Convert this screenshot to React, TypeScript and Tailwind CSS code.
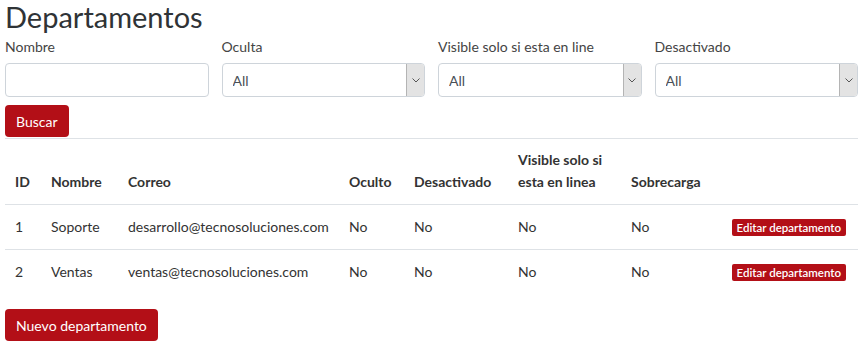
import React from 'react';

const filtros = ['Oculta', 'Visible solo si esta en line', 'Desactivado'];

const departamentos = [
  { id: 1, nombre: 'Soporte', correo: 'desarrollo@tecnosoluciones.com' },
  { id: 2, nombre: 'Ventas', correo: 'ventas@tecnosoluciones.com' },
];

function SelectAll() {
  return (
    <div className="relative h-[34px]">
      <select className="appearance-none w-full h-full rounded border border-[#ced4da] bg-white pl-[10px] text-[14px] text-[#495057] outline-none">
        <option>All</option>
      </select>
      <span className="absolute right-[1px] top-[1px] bottom-[1px] w-[18px] flex items-center justify-center bg-[#e3e3e3] border-l border-[#b4b4b4] rounded-r-[3px]">
        <svg width="8" height="5" viewBox="0 0 8 5" fill="none">
          <path d="M0.5 0.5 L4 4 L7.5 0.5" stroke="#555" strokeWidth="1" />
        </svg>
      </span>
    </div>
  );
}

export default function App() {
  return (
    <div className="px-[5px] pr-[6px] bg-white text-[#212529]" style={{ fontFamily: 'Lato, "Noto Sans", sans-serif' }}>
      <h3 className="text-[29px] leading-[35px] text-[#2f3336] -mt-[1px]">Departamentos</h3>

      {/* Filtros */}
      <div className="grid grid-cols-4 gap-x-[13px] mt-[3px]">
        <div>
          <label className="block text-[14px] leading-[20px] text-[#444] mb-[6px]">Nombre</label>
          <input type="text" className="w-full h-[34px] rounded border border-[#ced4da] bg-white outline-none" />
        </div>
        {filtros.map(f => (
          <div key={f}>
            <label className="block text-[14px] leading-[20px] text-[#444] mb-[6px]">{f}</label>
            <SelectAll />
          </div>
        ))}
      </div>

      <div className="mt-[8px] pb-[1px] border-b border-[#dee2e6]">
        <button className="h-[32px] px-[11px] rounded bg-[#b30f17] text-white text-[14px]">Buscar</button>
      </div>

      {/* Tabla */}
      <table className="table-fixed w-[853px] border-collapse text-[14px]">
        <colgroup>
          <col className="w-[36px]" />
          <col className="w-[77px]" />
          <col className="w-[221px]" />
          <col className="w-[65px]" />
          <col className="w-[104px]" />
          <col className="w-[113px]" />
          <col className="w-[100px]" />
          <col className="w-[137px]" />
        </colgroup>
        <thead>
          <tr className="h-[65px] border-b border-[#dee2e6]">
            {['ID', 'Nombre', 'Correo', 'Oculto', 'Desactivado', 'Visible solo si esta en linea', 'Sobrecarga', ''].map((h, i) => (
              <th key={i} className="align-bottom text-left font-bold pl-[10px] pb-[11px] leading-[22px] text-[#333]">{h}</th>
            ))}
          </tr>
        </thead>
        <tbody>
          {departamentos.map((d, i) => (
            <tr key={d.id} className={`h-[45px] ${i === 0 ? 'border-b border-[#dee2e6]' : ''}`}>
              <td className="pl-[10px] text-[#333]">{d.id}</td>
              <td className="pl-[10px] text-[#333]">{d.nombre}</td>
              <td className="pl-[10px] text-[#333]">{d.correo}</td>
              <td className="pl-[10px] text-[#333]">No</td>
              <td className="pl-[10px] text-[#333]">No</td>
              <td className="pl-[10px] text-[#333]">No</td>
              <td className="pl-[10px] text-[#333]">No</td>
              <td className="pl-[4px] pr-[12px] text-right whitespace-nowrap">
                <button className="h-[17px] px-[5px] rounded-[2px] bg-[#b30f17] text-white text-[11.5px] font-semibold leading-[17px] whitespace-nowrap">Editar departamento</button>
              </td>
            </tr>
          ))}
        </tbody>
      </table>

      <div className="mt-[15px]">
        <button className="h-[32px] px-[11px] rounded bg-[#b30f17] text-white text-[14px]">Nuevo departamento</button>
      </div>
    </div>
  );
}
